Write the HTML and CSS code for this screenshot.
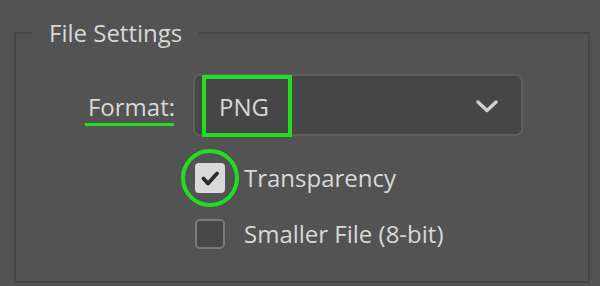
FILE: index.html
```html
<!DOCTYPE html>
<html>
<head>
<meta charset="utf-8">
<link rel="stylesheet" href="styles.css">
</head>
<body>
<fieldset class="group">
  <legend class="legend">File Settings</legend>
  <div class="form">
    <div class="label-cell"><span class="label">Format:</span></div>
    <div class="select">
      <span class="select-value">PNG</span>
      <span class="highlight-box"></span>
      <svg class="chevron" width="22" height="13" viewBox="0 0 22 13"><path d="M2 2 L11 10.5 L20 2" fill="none" stroke="#cfcfcf" stroke-width="3.4" stroke-linecap="round" stroke-linejoin="round"/></svg>
    </div>
    <div></div>
    <div class="options">
      <label class="option">
        <span class="box checked">
          <svg width="30" height="30" viewBox="0 0 30 30"><path d="M8.5 15.5 L13 20.5 L22 10.5" fill="none" stroke="#2b2b2b" stroke-width="3.8" stroke-linecap="round" stroke-linejoin="round"/></svg>
          <span class="highlight-ring"></span>
        </span>
        <span class="option-text">Transparency</span>
      </label>
      <label class="option">
        <span class="box"></span>
        <span class="option-text">Smaller File (8-bit)</span>
      </label>
    </div>
  </div>
</fieldset>
</body>
</html>
```
FILE: styles.css
```css
html, body {
  margin: 0;
  padding: 0;
  background: #535353;
}
body {
  width: 600px;
  height: 286px;
  overflow: hidden;
  font-family: "Open Sans", "Noto Sans", sans-serif;
  color: #d8d8d8;
  font-size: 24px;
}
.group {
  margin: 0;
  margin-left: 14px;
  margin-top: 18px;
  width: 576px;
  height: 265px;
  box-sizing: border-box;
  border: 2px solid #464646;
  padding: 0;
}
.legend {
  margin-left: 16px;
  padding: 0 17px;
  line-height: 30px;
}
.form {
  display: grid;
  grid-template-columns: 159px 330px;
  column-gap: 18px;
  margin-top: 26px;
}
.label-cell {
  display: flex;
  justify-content: flex-end;
  align-items: center;
}
.label {
  position: relative;
  line-height: 30px;
  top: 2px;
}
.label::after {
  content: "";
  position: absolute;
  left: -3px;
  right: 1px;
  top: 31px;
  height: 3px;
  background: #22dd22;
}
.select {
  position: relative;
  height: 62px;
  box-sizing: border-box;
  border: 2px solid #5e5e5e;
  border-radius: 7px;
  background: #464646;
  display: flex;
  align-items: center;
  justify-content: space-between;
  padding: 0 23px 0 24px;
}
.select-value {
  line-height: 30px;
  position: relative;
  top: 2px;
}
.highlight-box {
  position: absolute;
  left: 7px;
  top: -1px;
  width: 90px;
  height: 62px;
  box-sizing: border-box;
  border: 4px solid #22dd22;
}
.chevron {
  display: block;
  margin-top: 2px;
}
.options {
  display: flex;
  flex-direction: column;
  gap: 26px;
  margin-top: 27px;
  padding-left: 2px;
}
.option {
  display: flex;
  align-items: center;
  gap: 19px;
  height: 30px;
}
.box {
  position: relative;
  width: 30px;
  height: 30px;
  box-sizing: border-box;
  border: 2px solid #7a7a7a;
  border-radius: 5px;
  background: #474747;
  flex: none;
}
.box.checked {
  border: none;
  background: #d9d9d9;
  border-radius: 4px;
}
.box svg {
  display: block;
}
.highlight-ring {
  position: absolute;
  left: -14px;
  top: -14px;
  width: 58px;
  height: 58px;
  box-sizing: border-box;
  border: 4px solid #22dd22;
  border-radius: 50%;
}
.option-text {
  line-height: 30px;
}
```
